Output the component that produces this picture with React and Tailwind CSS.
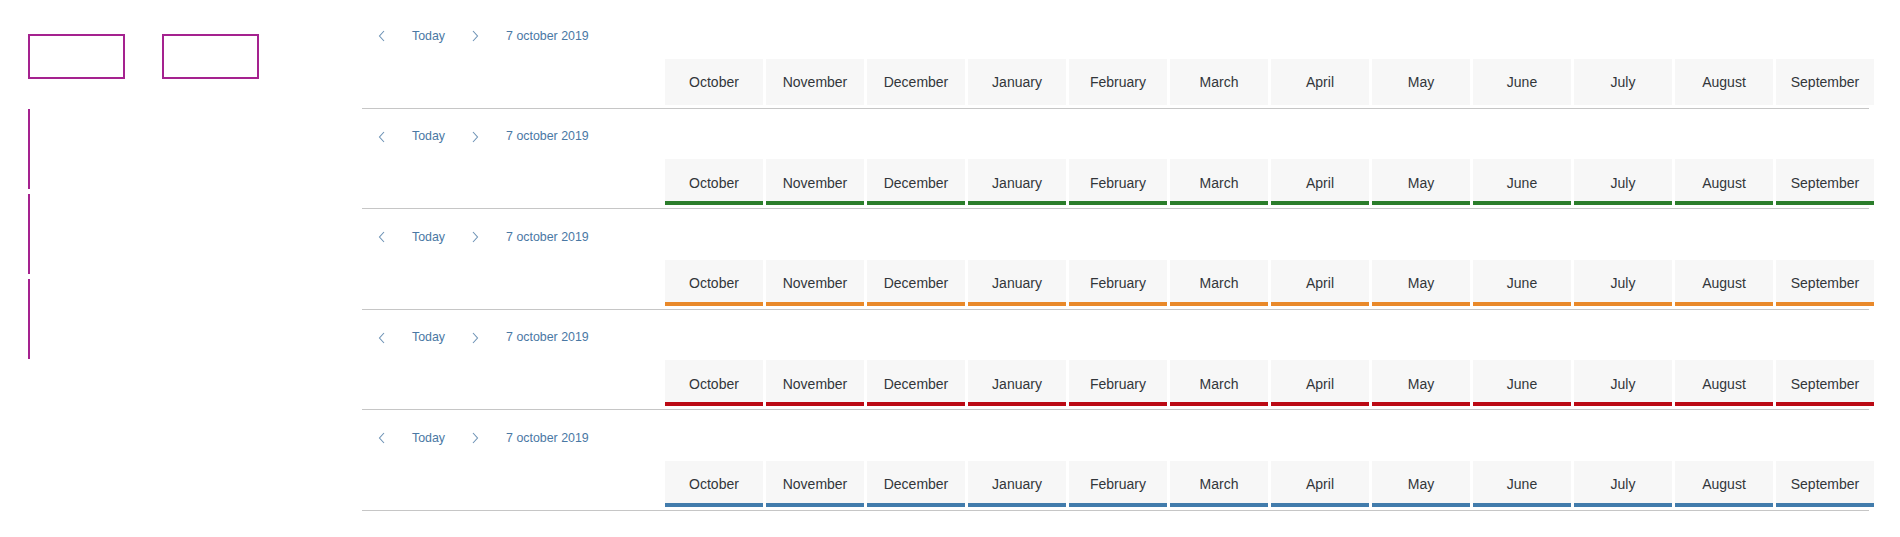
import React from "react";

const MONTHS = [
  "October",
  "November",
  "December",
  "January",
  "February",
  "March",
  "April",
  "May",
  "June",
  "July",
  "August",
  "September",
];

const ROWS = [
  { bar: "" },
  { bar: "bg-[#2b7d2b]" },
  { bar: "bg-[#e9892a]" },
  { bar: "bg-[#bb0a14]" },
  { bar: "bg-[#427cac]" },
];

function Chevron({ dir }) {
  return (
    <svg width="8" height="12" viewBox="0 0 8 12" fill="none">
      {dir === "left" ? (
        <polyline points="6,1 1.5,6 6,11" stroke="#6e93b6" strokeWidth="1.1" />
      ) : (
        <polyline points="2,1 6.5,6 2,11" stroke="#6e93b6" strokeWidth="1.1" />
      )}
    </svg>
  );
}

function HeaderRow({ bar }) {
  return (
    <div className="flex h-[100.5px] flex-col border-b border-[#c6c6c6]">
      <div className="flex h-[50.5px] items-center pt-[6px] text-[12.4px] text-[#4a78a4]">
        <div className="flex w-[40px] items-center justify-center">
          <Chevron dir="left" />
        </div>
        <div className="px-[10px]">Today</div>
        <div className="flex w-[40px] items-center justify-center">
          <Chevron dir="right" />
        </div>
        <div className="pl-[11px]">7 october 2019</div>
      </div>
      <div className="flex">
        <div className="w-[303px] flex-none" />
        <div className="flex flex-none gap-[3px]">
          {MONTHS.map((m) => (
            <div key={m} className="flex h-[46px] w-[98px] flex-none flex-col bg-[#f7f7f7]">
              <div className="flex flex-1 items-center justify-center pt-[6px] text-[14px] text-[#32363a]">
                {m}
              </div>
              <div className={`h-[4px] ${bar}`} />
            </div>
          ))}
        </div>
      </div>
    </div>
  );
}

export default function App() {
  return (
    <div
      className="flex h-[537px] w-[1900px] bg-white"
      style={{ fontFamily: '"Liberation Sans", Arial, sans-serif' }}
    >
      <div className="w-[362px] flex-none pl-[28px] pt-[34px]">
        <div className="flex gap-[37px]">
          <div className="h-[45px] w-[97px] border-2 border-[#a5228f]" />
          <div className="h-[45px] w-[97px] border-2 border-[#a5228f]" />
        </div>
        <div className="mt-[30px] flex flex-col gap-[5px]">
          <div className="h-[80px] w-[2px] bg-[#a5228f]" />
          <div className="h-[80px] w-[2px] bg-[#a5228f]" />
          <div className="h-[80px] w-[2px] bg-[#a5228f]" />
        </div>
      </div>
      <div className="w-[1507px] flex-none pt-[8px]">
        {ROWS.map((r, i) => (
          <HeaderRow key={i} bar={r.bar} />
        ))}
      </div>
    </div>
  );
}
